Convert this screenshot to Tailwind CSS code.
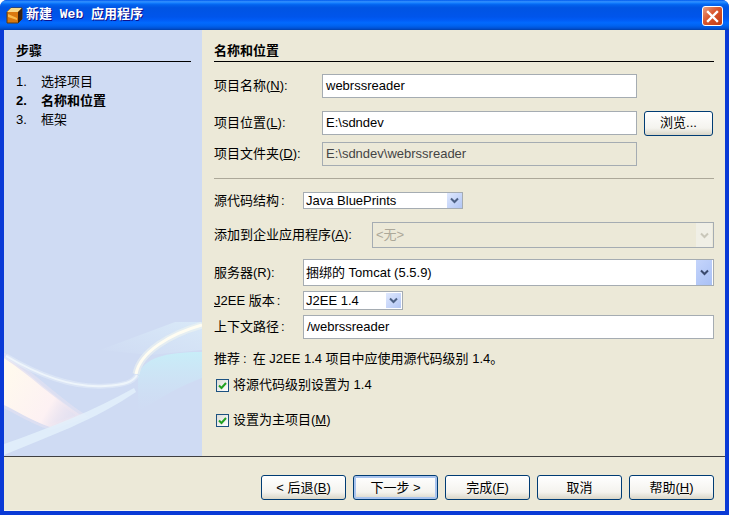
<!doctype html>
<html>
<head>
<meta charset="utf-8">
<script src="https://cdn.jsdelivr.net/npm/@tailwindcss/browser@4"></script>
</head>
<body class="bg-white">
<div class="w-[729px] h-[515px] flex flex-col overflow-hidden rounded-t-[7px] bg-[#0a3ad6] text-[13px] leading-4 text-black font-['Liberation_Sans','Noto_Sans_CJK_SC',sans-serif]">
  <div class="h-[30px] shrink-0 flex items-center pl-[6px] pr-[6px] bg-[linear-gradient(180deg,#0058ee_0%,#3593ff_6%,#127dff_10%,#0262ee_16%,#0054e3_26%,#0055eb_56%,#005bf5_66%,#026afe_76%,#0062ef_86%,#0052d6_94%,#0040ab_100%)]">
    <svg width="17" height="17" viewBox="0 0 17 17" class="shrink-0">
      <path d="M1 5 L5 1 H16 V12 L12 16 H1 Z" fill="#d9780f" stroke="#5a3a12" stroke-width="1"/>
      <path d="M1 5 L5 1 H16 L12 5 Z" fill="#f7d98a"/>
      <path d="M12 5 L16 1 V12 L12 16 Z" fill="#3a220c"/>
      <path d="M2 7 L11 11 V13 L2 10 Z" fill="#f9b94a"/>
    </svg>
    <div class="ml-[3px] text-white font-bold whitespace-pre font-['Liberation_Mono','Noto_Sans_CJK_SC',monospace] [text-shadow:1px_1px_#0f1089]">新建 Web 应用程序</div>
    <div class="ml-auto mt-[2px] w-[21px] h-[20px] rounded-[3px] border border-white flex items-center justify-center bg-[linear-gradient(135deg,#e9a083_0%,#d9552c_45%,#c23a12_100%)]">
      <svg width="13" height="13" viewBox="0 0 13 13"><path d="M2 2 L11 11 M11 2 L2 11" stroke="#fff" stroke-width="2.4" stroke-linecap="square"/></svg>
    </div>
  </div>
  <div class="flex-1 mx-[4px] mb-[4px] flex flex-col bg-[#ece9d8] border-b border-[#f6f5ee]">
    <div class="h-[426px] flex shrink-0">
      <div class="relative w-[198px] shrink-0 bg-[#cfdbf3] overflow-hidden pl-[12px] pr-[11px] pt-[13px]">
        <svg class="absolute left-0 top-0" width="198" height="426" viewBox="4 30 198 426">
          <defs>
            <linearGradient id="pink" gradientUnits="userSpaceOnUse" x1="10" y1="372" x2="78" y2="412">
              <stop offset="0" stop-color="#fff9ee"/>
              <stop offset="0.65" stop-color="#fdf1f3"/>
              <stop offset="1" stop-color="#e8deee" stop-opacity="0.2"/>
            </linearGradient>
            <linearGradient id="cy" x1="0" y1="0" x2="0" y2="1">
              <stop offset="0" stop-color="#c8eef8"/>
              <stop offset="1" stop-color="#cfe2f5" stop-opacity="0"/>
            </linearGradient>
            <linearGradient id="haze" x1="0" y1="1" x2="1" y2="0">
              <stop offset="0" stop-color="#dff2fb" stop-opacity="0"/>
              <stop offset="1" stop-color="#dff2fb" stop-opacity=".6"/>
            </linearGradient>
          </defs>
          <path d="M100 350 L175 322 L202 322 V350 L150 355 Z" fill="url(#haze)"/>
          <path d="M138 376 C143 358 165 352 202 352 V378 C180 386 160 398 138 412 Z" fill="url(#cy)"/>
          <path d="M4 356 C30 373 55 398 82 416 C65 422 55 426 50 427 C30 420 15 410 4 405 Z" fill="#f3e9f2" fill-opacity=".5" stroke="#f3e9f2" stroke-opacity=".35" stroke-width="6"/>
          <path d="M4 358 C30 375 55 400 82 416 C65 422 55 426 50 427 C30 420 15 410 4 405 Z" fill="url(#pink)"/>
          <path d="M4 444 C50 428 95 410 134 388 L136 392 C95 420 50 436 4 455 Z" fill="#e3f1fb" fill-opacity=".8"/>
          <path d="M6 356 C40 376 75 388 105 386 C125 385 133 382 137 375" fill="none" stroke="#e8f2fa" stroke-opacity=".45" stroke-width="5"/>
          <path d="M6 356 C40 376 75 388 105 386 C125 385 133 382 137 375" fill="none" stroke="#eef5fb" stroke-width="2"/>
          <path d="M136 374 C140 352 170 334 202 325" fill="none" stroke="#f4f7f0" stroke-opacity=".5" stroke-width="7"/>
          <path d="M136 374 C140 352 170 334 202 325" fill="none" stroke="#fffdf2" stroke-width="3"/>
        </svg>
        <div class="relative">
          <div class="h-[19px] border-b border-black font-bold">步骤</div>
          <div class="mt-[10px] h-[19px] flex items-center"><span class="w-[25px]">1.</span><span>选择项目</span></div>
          <div class="h-[19px] flex items-center font-bold"><span class="w-[25px]">2.</span><span>名称和位置</span></div>
          <div class="h-[19px] flex items-center"><span class="w-[25px]">3.</span><span>框架</span></div>
        </div>
      </div>
      <div class="flex-1 pl-[12px] pr-[11px] pt-[13px]">
        <div class="h-[19px] border-b border-black font-bold">名称和位置</div>
        <div class="mt-[12px] h-6 flex items-center">
          <div class="w-[108px]">项目名称(<span class="underline">N</span>):</div>
          <div class="w-[315px] h-full flex items-center px-[3px] bg-white border border-[#a5acb2]">webrssreader</div>
        </div>
        <div class="mt-[13px] h-6 flex items-center">
          <div class="w-[108px]">项目位置(<span class="underline">L</span>):</div>
          <div class="w-[315px] h-full flex items-center px-[3px] bg-white border border-[#a5acb2]">E:\sdndev</div>
          <div class="ml-[7px] w-[69px] h-[25px] rounded-[3px] border border-[#003c74] flex items-center justify-center bg-[linear-gradient(180deg,#ffffff_0%,#f4f3ee_70%,#d9d6c8_100%)]">浏览...</div>
        </div>
        <div class="mt-[7px] h-6 flex items-center">
          <div class="w-[108px]">项目文件夹(<span class="underline">D</span>):</div>
          <div class="w-[315px] h-full flex items-center px-[3px] bg-[#ece9d8] text-[#444] border border-[#a5acb2]">E:\sdndev\webrssreader</div>
        </div>
        <div class="mt-[12px] h-px bg-[#aca899]"></div>
        <div class="mt-[13px] h-[17px] flex items-center">
          <div class="w-[89px]">源代码结构<span class="ml-[2px]">:</span></div>
          <div class="w-[160px] h-full flex items-center justify-between pl-[2px] bg-white border border-[#a5acb2]">
            <span>Java BluePrints</span>
            <div class="w-[15px] h-[15px] flex items-center justify-center bg-[linear-gradient(135deg,#dfe8fd,#b2c6f5)]">
              <svg width="9" height="7" viewBox="0 0 9 7"><path d="M1 1.5 L4.5 5 L8 1.5" fill="none" stroke="#4d6185" stroke-width="2"/></svg>
            </div>
          </div>
        </div>
        <div class="mt-[13px] h-[26px] flex items-center">
          <div class="w-[158px] whitespace-nowrap">添加到企业应用程序(<span class="underline">A</span>):</div>
          <div class="w-[342px] h-full flex items-center justify-between pl-[3px] pr-px border border-[#a5acb2]">
            <span class="text-[#aca899]">&lt;无&gt;</span>
            <div class="w-[16px] h-[24px] flex items-center justify-center bg-[#f0efe6]">
              <svg width="9" height="7" viewBox="0 0 9 7"><path d="M1 1.5 L4.5 5 L8 1.5" fill="none" stroke="#c9c7ba" stroke-width="2"/></svg>
            </div>
          </div>
        </div>
        <div class="mt-[11px] h-[27px] flex items-center">
          <div class="w-[89px]">服务器(R):</div>
          <div class="w-[411px] h-full flex items-center justify-between pl-[2px] pr-px bg-white border border-[#a5acb2]">
            <span>捆绑的 Tomcat (5.5.9)</span>
            <div class="w-[16px] h-[25px] flex items-center justify-center bg-[linear-gradient(135deg,#c5d5fb,#a9c0f5)]">
              <svg width="9" height="7" viewBox="0 0 9 7"><path d="M1 1.5 L4.5 5 L8 1.5" fill="none" stroke="#3a4a6e" stroke-width="2"/></svg>
            </div>
          </div>
        </div>
        <div class="mt-[5px] h-[19px] flex items-center">
          <div class="w-[89px]"><span class="underline">J</span>2EE 版本<span class="ml-[2px]">:</span></div>
          <div class="w-[100px] h-full flex items-center justify-between pl-[2px] pr-px bg-white border border-[#a5acb2]">
            <span>J2EE 1.4</span>
            <div class="w-[15px] h-[15px] flex items-center justify-center bg-[linear-gradient(135deg,#dfe8fd,#b2c6f5)]">
              <svg width="9" height="7" viewBox="0 0 9 7"><path d="M1 1.5 L4.5 5 L8 1.5" fill="none" stroke="#4d6185" stroke-width="2"/></svg>
            </div>
          </div>
        </div>
        <div class="mt-[5px] h-6 flex items-center">
          <div class="w-[89px]">上下文路径<span class="ml-[2px]">:</span></div>
          <div class="w-[411px] h-full flex items-center px-[3px] bg-white border border-[#a5acb2]">/webrssreader</div>
        </div>
        <div class="mt-[12px] h-4 whitespace-nowrap">推荐<span class="ml-[3px] mr-[6px]">:</span>在 J2EE 1.4 项目中应使用源代码级别 1.4。</div>
        <div class="mt-[10px] h-4 flex items-center pl-[2px]">
          <div class="w-[13px] h-[13px] mr-[4px] border border-[#1c5180] flex items-center justify-center bg-[linear-gradient(135deg,#dcdcd7,#ffffff)]">
            <svg width="9" height="9" viewBox="0 0 9 9"><path d="M1 4.5 L3.5 7 L8 2" fill="none" stroke="#21a121" stroke-width="2"/></svg>
          </div>
          <span>将源代码级别设置为 1.4</span>
        </div>
        <div class="mt-[19px] h-4 flex items-center pl-[2px]">
          <div class="w-[13px] h-[13px] mr-[4px] border border-[#1c5180] flex items-center justify-center bg-[linear-gradient(135deg,#dcdcd7,#ffffff)]">
            <svg width="9" height="9" viewBox="0 0 9 9"><path d="M1 4.5 L3.5 7 L8 2" fill="none" stroke="#21a121" stroke-width="2"/></svg>
          </div>
          <span>设置为主项目(<span class="underline">M</span>)</span>
        </div>
      </div>
    </div>
    <div class="h-px bg-[#404040] shrink-0"></div>
    <div class="flex-1 flex justify-end items-start gap-[7px] pt-[18px] pr-[11px]">
      <div class="w-[85px] h-[25px] rounded-[3px] border border-[#003c74] flex items-center justify-center bg-[linear-gradient(180deg,#ffffff_0%,#f4f3ee_70%,#d9d6c8_100%)]">&lt; 后退(<span class="underline">B</span>)</div>
      <div class="w-[85px] h-[25px] rounded-[3px] border border-[#003c74] flex items-center justify-center bg-[linear-gradient(180deg,#ffffff_0%,#f4f3ee_70%,#d9d6c8_100%)] shadow-[inset_0_0_0_2px_#a9c4ee]">下一步 &gt;</div>
      <div class="w-[85px] h-[25px] rounded-[3px] border border-[#003c74] flex items-center justify-center bg-[linear-gradient(180deg,#ffffff_0%,#f4f3ee_70%,#d9d6c8_100%)]">完成(<span class="underline">F</span>)</div>
      <div class="w-[85px] h-[25px] rounded-[3px] border border-[#003c74] flex items-center justify-center bg-[linear-gradient(180deg,#ffffff_0%,#f4f3ee_70%,#d9d6c8_100%)]">取消</div>
      <div class="w-[85px] h-[25px] rounded-[3px] border border-[#003c74] flex items-center justify-center bg-[linear-gradient(180deg,#ffffff_0%,#f4f3ee_70%,#d9d6c8_100%)]">帮助(<span class="underline">H</span>)</div>
    </div>
  </div>
</div>
</body>
</html>
